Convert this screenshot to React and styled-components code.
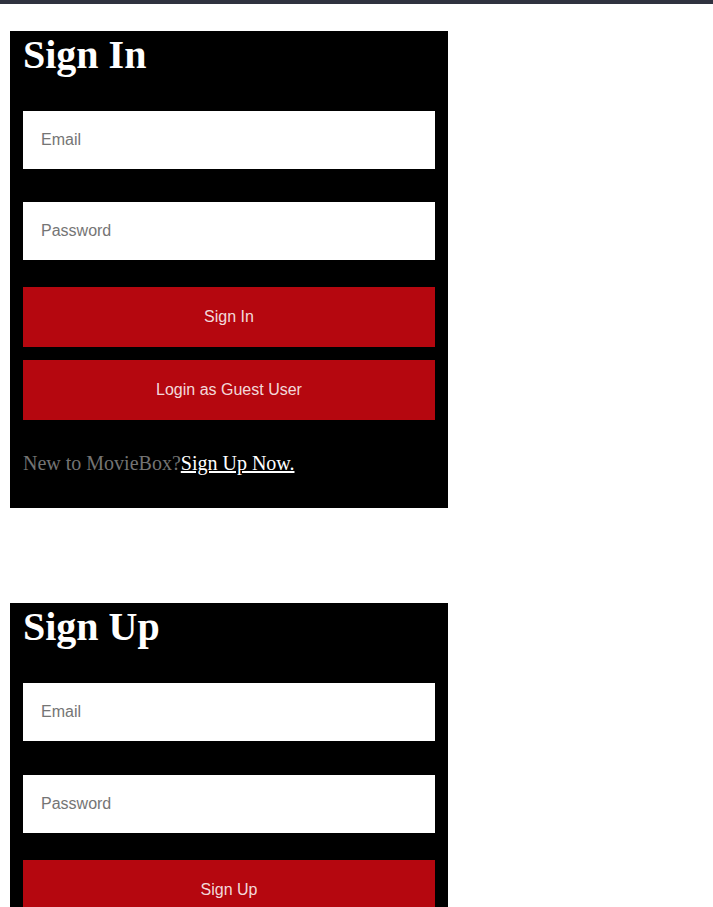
import styled, { createGlobalStyle } from "styled-components";

const GlobalStyle = createGlobalStyle`
  body {
    margin: 0;
    background: #ffffff;
    font-family: "Liberation Serif", "Times New Roman", serif;
  }
`;

const TopBar = styled.div`
  height: 4px;
  background-color: #2f323f;
`;

const Page = styled.div`
  display: flex;
  flex-direction: column;
  gap: 95px;
  padding: 27px 10px 40px;
`;

const Card = styled.form`
  width: 438px;
  box-sizing: border-box;
  background-color: #000;
  padding: 0 13px ${(p) => p.$bottom}px;
  display: flex;
  flex-direction: column;
`;

const Title = styled.h1`
  margin: 0 0 32px;
  font-size: 40px;
  line-height: 48px;
  font-weight: bold;
  color: #fff;
`;

const Input = styled.input`
  height: 58px;
  box-sizing: border-box;
  border: none;
  outline: none;
  padding: 0 18px;
  margin-bottom: ${(p) => p.$gap}px;
  font-family: "Liberation Sans", Arial, sans-serif;
  font-size: 16px;
  background: #fff;
  &::placeholder {
    color: #757575;
  }
`;

const Button = styled.button`
  height: 60px;
  border: none;
  margin-bottom: ${(p) => p.$gap || 0}px;
  background-color: #b5070f;
  color: rgba(255, 255, 255, 0.86);
  font-family: "Liberation Sans", Arial, sans-serif;
  font-size: 16px;
  cursor: pointer;
`;

const Footnote = styled.p`
  margin: 32px 0 0;
  font-size: 20px;
  line-height: 23px;
  color: #737373;
`;

const SignUpLink = styled.a`
  color: #fff;
  text-decoration: underline;
`;

const App = () => {
  return (
    <>
      <GlobalStyle />
      <TopBar />
      <Page>
        <Card $bottom={33} onSubmit={(e) => e.preventDefault()}>
          <Title>Sign In</Title>
          <Input type="email" placeholder="Email" $gap={33} />
          <Input type="password" placeholder="Password" $gap={27} />
          <Button type="submit" $gap={13}>
            Sign In
          </Button>
          <Button type="button">Login as Guest User</Button>
          <Footnote>
            New to MovieBox?<SignUpLink href="#">Sign Up Now.</SignUpLink>
          </Footnote>
        </Card>
        <Card $bottom={31} onSubmit={(e) => e.preventDefault()}>
          <Title>Sign Up</Title>
          <Input type="email" placeholder="Email" $gap={34} />
          <Input type="password" placeholder="Password" $gap={27} />
          <Button type="submit">Sign Up</Button>
        </Card>
      </Page>
    </>
  );
};

export default App;
